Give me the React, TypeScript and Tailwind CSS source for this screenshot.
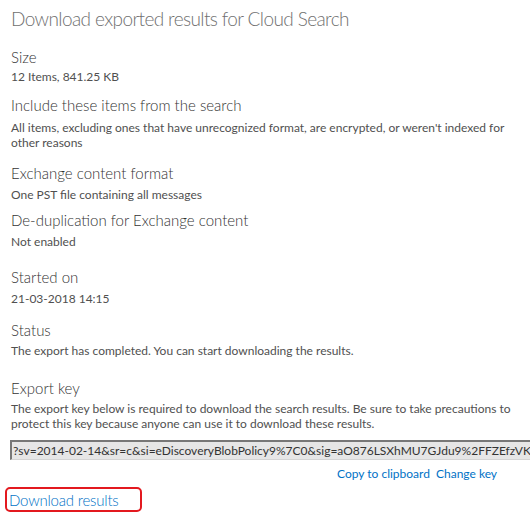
import React from "react";

type Section = {
  label: string;
  lines: string[];
  headGap: string;
  bodyGap: string;
};

const sections: Section[] = [
  { label: "Size", lines: ["12 Items, 841.25 KB"], headGap: "mt-[15px]", bodyGap: "mt-[2px]" },
  {
    label: "Include these items from the search",
    lines: [
      "All items, excluding ones that have unrecognized format, are encrypted, or weren't indexed for",
      "other reasons",
    ],
    headGap: "mt-[11px]",
    bodyGap: "mt-[5px]",
  },
  {
    label: "Exchange content format",
    lines: ["One PST file containing all messages"],
    headGap: "mt-[13px]",
    bodyGap: "mt-[4px]",
  },
  {
    label: "De-duplication for Exchange content",
    lines: ["Not enabled"],
    headGap: "mt-[8px]",
    bodyGap: "mt-[4px]",
  },
  { label: "Started on", lines: ["21-03-2018 14:15"], headGap: "mt-[18px]", bodyGap: "mt-[4px]" },
  {
    label: "Status",
    lines: ["The export has completed. You can start downloading the results."],
    headGap: "mt-[14px]",
    bodyGap: "mt-[3px]",
  },
  {
    label: "Export key",
    lines: [
      "The export key below is required to download the search results. Be sure to take precautions to",
      "protect this key because anyone can use it to download these results.",
    ],
    headGap: "mt-[20px]",
    bodyGap: "mt-[3px]",
  },
];

const exportKey =
  "?sv=2014-02-14&sr=c&si=eDiscoveryBlobPolicy9%7C0&sig=aO876LSXhMU7GJdu9%2FFZEfzVKiq3Ws%3D";

const App = () => {
  return (
    <div className="w-[530px] h-[514px] overflow-hidden bg-white font-['Lato',sans-serif] pl-[11px]">
      <h1 className="pt-[5px] text-[19px] leading-[27px] font-light tracking-[-0.6px] text-[#707070] whitespace-nowrap">
        Download exported results for Cloud Search
      </h1>

      {sections.map((s) => (
        <div key={s.label} className={s.headGap}>
          <div className="text-[15px] leading-[20px] font-light text-[#333] whitespace-nowrap">
            {s.label}
          </div>
          <div className={`${s.bodyGap} text-[12px] leading-[15px] text-[#505050] whitespace-nowrap`}>
            {s.lines.map((l) => (
              <div key={l}>{l}</div>
            ))}
          </div>
        </div>
      ))}

      <div className="mt-[9px] -ml-px h-[20px] bg-[#e6e6e6] border-t-2 border-l-2 border-t-[#777] border-l-[#777] border-b border-b-[#d4d4d4] overflow-hidden">
        <div className="pl-[1px] pt-[1px] text-[12px] leading-[16px] text-[#333] whitespace-nowrap">
          {exportKey}
        </div>
      </div>

      <div className="mt-[6px] h-[15px] flex justify-end gap-[6px] pr-[33px] text-[12px] leading-[15px] text-[#0072c6] whitespace-nowrap">
        <span>Copy to clipboard</span>
        <span>Change key</span>
      </div>

      <div className="mt-[6px] -ml-[6px] w-[137px] h-[25px] rounded-[5px] border-2 border-[#e3191f] pl-[2px]">
        <span className="block pt-[1px] text-[15px] leading-[20px] font-light tracking-[-0.2px] text-[#0072c6] whitespace-nowrap">
          Download results
        </span>
      </div>
    </div>
  );
};

export default App;
